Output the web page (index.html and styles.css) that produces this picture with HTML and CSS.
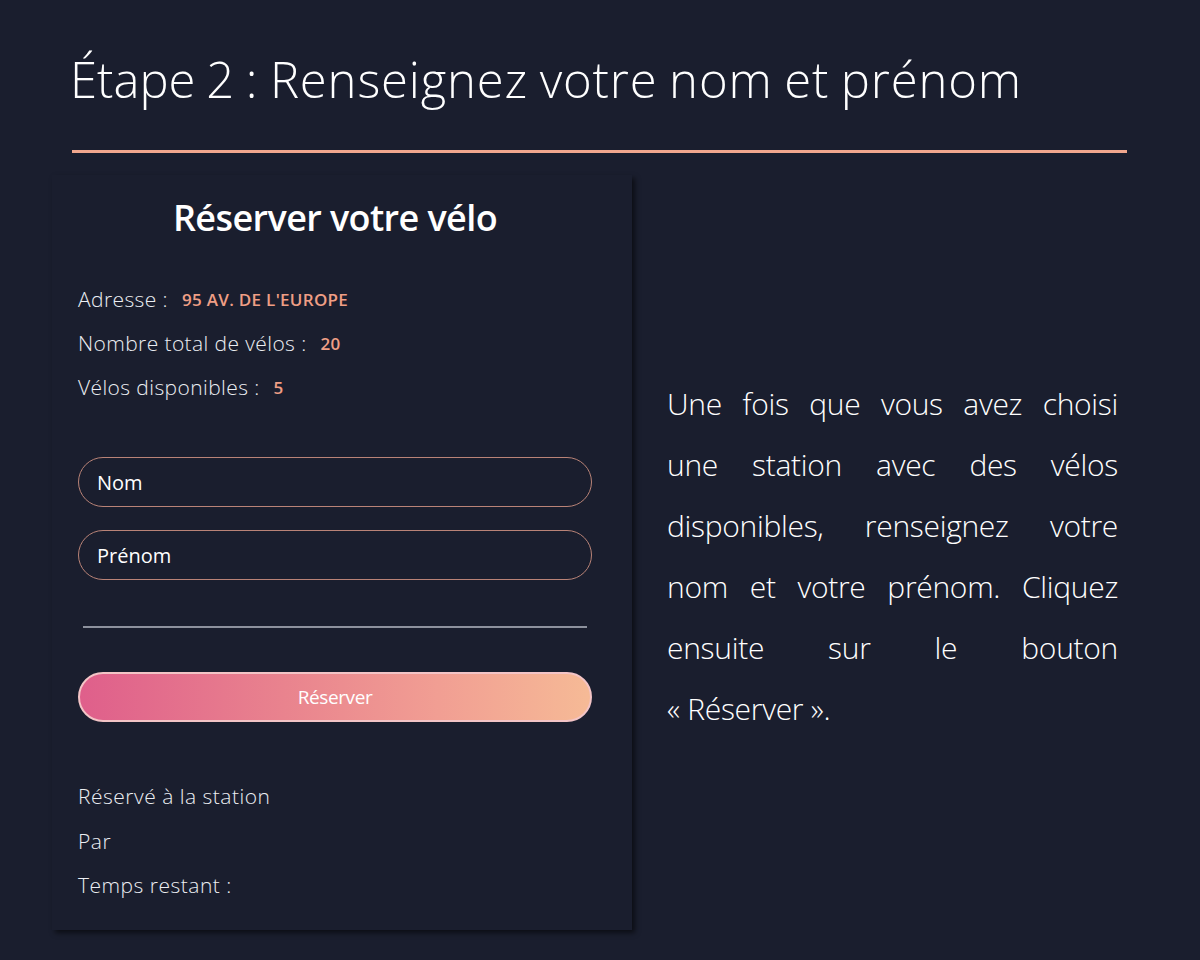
FILE: index.html
```html
<!DOCTYPE html>
<html lang="fr">
<head>
<meta charset="utf-8">
<title>Étape 2</title>
<link rel="stylesheet" href="styles.css">
</head>
<body>
<main class="page">
  <h1 class="step-title"><span class="step-num">Étape 2</span> : Renseignez votre nom et prénom</h1>
  <hr class="step-rule">
  <section class="step-body">
    <div class="card">
      <h2 class="card-title">Réserver votre vélo</h2>
      <ul class="info">
        <li><span class="info-label">Adresse :</span><span class="info-value">95 AV. DE L'EUROPE</span></li>
        <li><span class="info-label">Nombre total de vélos :</span><span class="info-value">20</span></li>
        <li><span class="info-label">Vélos disponibles :</span><span class="info-value">5</span></li>
      </ul>
      <form class="form">
        <input class="field" type="text" placeholder="Nom">
        <input class="field" type="text" placeholder="Prénom">
        <div class="signature"></div>
        <button class="btn" type="button">Réserver</button>
      </form>
      <ul class="status">
        <li>Réservé à la station</li>
        <li>Par</li>
        <li>Temps restant :</li>
      </ul>
    </div>
    <div class="explain">
      <p class="explain-text">
        <span class="line">Une fois que vous avez choisi</span>
        <span class="line">une station avec des vélos</span>
        <span class="line">disponibles, renseignez votre</span>
        <span class="line">nom et votre prénom. Cliquez</span>
        <span class="line">ensuite sur le bouton</span>
        <span class="line last">«&nbsp;Réserver&nbsp;».</span>
      </p>
    </div>
  </section>
</main>
</body>
</html>
```

FILE: styles.css
```css
* { box-sizing: border-box; }
html, body {
  margin: 0;
  padding: 0;
  background: #1a1e2e;
  color: #ffffff;
  font-family: "Open Sans", "Noto Sans", sans-serif;
}
.page {
  width: 1200px;
  height: 960px;
  padding: 50px 73px 0 52px;
  overflow: hidden;
}
.step-title {
  margin: 0 0 0 18px;
  font-size: 49px;
  line-height: 58px;
  font-weight: 300;
  letter-spacing: 0.85px;
  word-spacing: -2px;
  color: #ffffff;
  white-space: nowrap;
}
.step-num { letter-spacing: 0; }
.step-rule {
  margin: 42px 0 0 20px;
  border: 0;
  height: 3px;
  background: #f1a78e;
}
.step-body {
  display: flex;
  margin-top: 22px;
  gap: 35px;
}
.card {
  width: 580px;
  flex: none;
  padding: 20px 40px 22px 26px;
  box-shadow: 3px 3px 5px rgba(0, 0, 0, 0.55);
}
.card-title {
  margin: 0;
  text-align: center;
  font-family: "Open Sans", sans-serif;
  font-weight: 600;
  font-size: 36px;
  line-height: 46px;
  letter-spacing: -0.6px;
}
.info {
  list-style: none;
  margin: 36px 0 0;
  padding: 0;
}
.info li {
  height: 44px;
  display: flex;
  align-items: center;
}
.info-label {
  font-weight: 300;
  font-size: 21px;
  color: #eceef3;
  letter-spacing: 0.4px;
}
.info-value {
  margin-left: 14px;
  font-weight: 600;
  font-size: 17px;
  color: #ef9e85;
  letter-spacing: 0.3px;
}
.form {
  margin-top: 48px;
  display: flex;
  flex-direction: column;
}
.field {
  height: 50px;
  width: 514px;
  border: 1.5px solid #b98377;
  border-radius: 25px;
  background: transparent;
  padding: 0 18px;
  font-family: "Open Sans", sans-serif;
  font-size: 20px;
  font-weight: 500;
  color: #ffffff;
  outline: none;
}
.field::placeholder { color: #ffffff; opacity: 1; }
.field + .field { margin-top: 23px; }
.signature {
  margin: 46px 5px 0;
  height: 2px;
  background: #8d919d;
}
.btn {
  margin-top: 44px;
  height: 50px;
  width: 514px;
  border-radius: 25px;
  border: 2px solid #f3c4c6;
  background: linear-gradient(90deg, #df5f8b 0%, #e9838e 40%, #f19e93 70%, #f6ba96 100%);
  color: #ffffff;
  font-family: "Open Sans", sans-serif;
  font-size: 19px;
  font-weight: 400;
  letter-spacing: -0.4px;
}
.status {
  list-style: none;
  margin: 52px 0 0;
  padding: 0;
}
.status li {
  height: 44.5px;
  display: flex;
  align-items: center;
  font-weight: 300;
  font-size: 21px;
  color: #eceef3;
  letter-spacing: 0.5px;
}
.explain {
  width: 451px;
  flex: none;
  display: flex;
  align-items: center;
  padding-top: 8px;
}
.explain-text {
  margin: 0;
  width: 100%;
  font-weight: 300;
  font-size: 30px;
  line-height: 61px;
  letter-spacing: -0.3px;
  color: #ffffff;
}
.line {
  display: block;
  text-align: justify;
  text-align-last: justify;
}
.line.last { text-align-last: left; }
```
